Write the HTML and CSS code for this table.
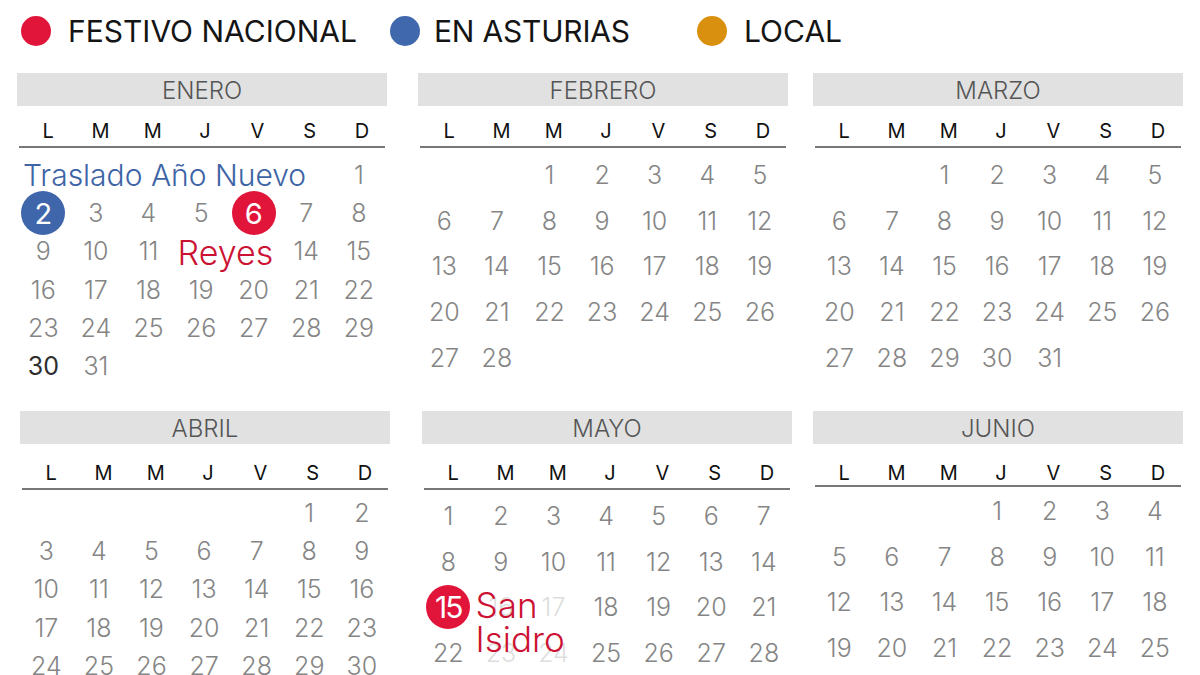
FILE: index.html
```html
<!DOCTYPE html>
<html lang="es">
<head>
<meta charset="utf-8">
<title>Calendario laboral 2023 Asturias</title>
<link rel="stylesheet" href="styles.css">
</head>
<body>
<div class="page">
  <header class="legend">
    <div class="legend-item legend-item--nacional"><span class="dot dot--red"></span><span class="legend-text">FESTIVO NACIONAL</span></div>
    <div class="legend-item legend-item--region"><span class="dot dot--blue"></span><span class="legend-text">EN ASTURIAS</span></div>
    <div class="legend-item legend-item--local"><span class="dot dot--orange"></span><span class="legend-text">LOCAL</span></div>
  </header>

  <main class="months">
    <section class="month month--top month--enero">
      <div class="month-title">ENERO</div>
      <div class="weekdays"><span>L</span><span>M</span><span>M</span><span>J</span><span>V</span><span>S</span><span>D</span></div>
      <div class="days days--short">
        <div class="note note--blue">Traslado Año Nuevo</div><div class="day">1</div>
        <div class="day"><span class="badge badge--blue">2</span></div><div class="day">3</div><div class="day">4</div><div class="day">5</div><div class="day"><span class="badge badge--red">6</span></div><div class="day">7</div><div class="day">8</div>
        <div class="day">9</div><div class="day">10</div><div class="day">11</div><div class="note note--reyes">Reyes</div><div class="day">14</div><div class="day">15</div>
        <div class="day">16</div><div class="day">17</div><div class="day">18</div><div class="day">19</div><div class="day">20</div><div class="day">21</div><div class="day">22</div>
        <div class="day">23</div><div class="day">24</div><div class="day">25</div><div class="day">26</div><div class="day">27</div><div class="day">28</div><div class="day">29</div>
        <div class="day day--dark">30</div><div class="day">31</div>
      </div>
    </section>

    <section class="month month--top month--febrero">
      <div class="month-title">FEBRERO</div>
      <div class="weekdays"><span>L</span><span>M</span><span>M</span><span>J</span><span>V</span><span>S</span><span>D</span></div>
      <div class="days">
        <div class="day"></div><div class="day"></div><div class="day">1</div><div class="day">2</div><div class="day">3</div><div class="day">4</div><div class="day">5</div>
        <div class="day">6</div><div class="day">7</div><div class="day">8</div><div class="day">9</div><div class="day">10</div><div class="day">11</div><div class="day">12</div>
        <div class="day">13</div><div class="day">14</div><div class="day">15</div><div class="day">16</div><div class="day">17</div><div class="day">18</div><div class="day">19</div>
        <div class="day">20</div><div class="day">21</div><div class="day">22</div><div class="day">23</div><div class="day">24</div><div class="day">25</div><div class="day">26</div>
        <div class="day">27</div><div class="day">28</div>
      </div>
    </section>

    <section class="month month--top month--marzo">
      <div class="month-title">MARZO</div>
      <div class="weekdays"><span>L</span><span>M</span><span>M</span><span>J</span><span>V</span><span>S</span><span>D</span></div>
      <div class="days">
        <div class="day"></div><div class="day"></div><div class="day">1</div><div class="day">2</div><div class="day">3</div><div class="day">4</div><div class="day">5</div>
        <div class="day">6</div><div class="day">7</div><div class="day">8</div><div class="day">9</div><div class="day">10</div><div class="day">11</div><div class="day">12</div>
        <div class="day">13</div><div class="day">14</div><div class="day">15</div><div class="day">16</div><div class="day">17</div><div class="day">18</div><div class="day">19</div>
        <div class="day">20</div><div class="day">21</div><div class="day">22</div><div class="day">23</div><div class="day">24</div><div class="day">25</div><div class="day">26</div>
        <div class="day">27</div><div class="day">28</div><div class="day">29</div><div class="day">30</div><div class="day">31</div>
      </div>
    </section>

    <section class="month month--bottom month--abril">
      <div class="month-title">ABRIL</div>
      <div class="weekdays"><span>L</span><span>M</span><span>M</span><span>J</span><span>V</span><span>S</span><span>D</span></div>
      <div class="days days--short">
        <div class="day"></div><div class="day"></div><div class="day"></div><div class="day"></div><div class="day"></div><div class="day">1</div><div class="day">2</div>
        <div class="day">3</div><div class="day">4</div><div class="day">5</div><div class="day">6</div><div class="day">7</div><div class="day">8</div><div class="day">9</div>
        <div class="day">10</div><div class="day">11</div><div class="day">12</div><div class="day">13</div><div class="day">14</div><div class="day">15</div><div class="day">16</div>
        <div class="day">17</div><div class="day">18</div><div class="day">19</div><div class="day">20</div><div class="day">21</div><div class="day">22</div><div class="day">23</div>
        <div class="day">24</div><div class="day">25</div><div class="day">26</div><div class="day">27</div><div class="day">28</div><div class="day">29</div><div class="day">30</div>
      </div>
    </section>

    <section class="month month--bottom month--mayo">
      <div class="month-title">MAYO</div>
      <div class="weekdays"><span>L</span><span>M</span><span>M</span><span>J</span><span>V</span><span>S</span><span>D</span></div>
      <div class="days">
        <div class="day">1</div><div class="day">2</div><div class="day">3</div><div class="day">4</div><div class="day">5</div><div class="day">6</div><div class="day">7</div>
        <div class="day">8</div><div class="day">9</div><div class="day">10</div><div class="day">11</div><div class="day">12</div><div class="day">13</div><div class="day">14</div>
        <div class="day day--anchor"><span class="badge badge--red badge--tight">15</span><div class="overlay-note">San<br>Isidro</div></div><div class="day">16</div><div class="day">17</div><div class="day">18</div><div class="day">19</div><div class="day">20</div><div class="day">21</div>
        <div class="day">22</div><div class="day">23</div><div class="day">24</div><div class="day">25</div><div class="day">26</div><div class="day">27</div><div class="day">28</div>
        <div class="day">29</div><div class="day day--local"><span class="badge badge--orange">30</span></div><div class="day">31</div>
      </div>
    </section>

    <section class="month month--bottom month--junio">
      <div class="month-title">JUNIO</div>
      <div class="weekdays"><span>L</span><span>M</span><span>M</span><span>J</span><span>V</span><span>S</span><span>D</span></div>
      <div class="days">
        <div class="day"></div><div class="day"></div><div class="day"></div><div class="day">1</div><div class="day">2</div><div class="day">3</div><div class="day">4</div>
        <div class="day">5</div><div class="day">6</div><div class="day">7</div><div class="day">8</div><div class="day">9</div><div class="day">10</div><div class="day">11</div>
        <div class="day">12</div><div class="day">13</div><div class="day">14</div><div class="day">15</div><div class="day">16</div><div class="day">17</div><div class="day">18</div>
        <div class="day">19</div><div class="day">20</div><div class="day">21</div><div class="day">22</div><div class="day">23</div><div class="day">24</div><div class="day">25</div>
        <div class="day">26</div><div class="day">27</div><div class="day">28</div><div class="day">29</div><div class="day">30</div>
      </div>
    </section>
  </main>
</div>
</body>
</html>
```

FILE: styles.css
```css
* { box-sizing: border-box; }

html, body {
  margin: 0;
  padding: 0;
  background: #ffffff;
}

body {
  width: 1200px;
  height: 675px;
  overflow: hidden;
  font-family: Inter, "Noto Sans", "Liberation Sans", sans-serif;
}

.page {
  width: 1200px;
  height: 675px;
  overflow: hidden;
}

/* Legend */
.legend {
  display: flex;
  align-items: center;
  height: 62px;
  padding-left: 21px;
}

.legend-item {
  display: flex;
  align-items: center;
}

.legend-item--nacional { width: 369px; }
.legend-item--region { width: 307px; }

.dot {
  width: 30px;
  height: 30px;
  border-radius: 50%;
  margin-right: 17px;
  flex: none;
}

.dot--red { background: #e1143a; }
.dot--blue { background: #4068ad; }
.dot--orange { background: #da900f; }

.legend-text {
  font-size: 30px;
  line-height: 36px;
  color: #141414;
  white-space: nowrap;
}

.legend-item--region .legend-text { letter-spacing: -0.2px; margin-left: -3px; }

/* Month grid */
.months {
  display: grid;
  grid-template-columns: 401px 395px 370px;
  grid-template-rows: 338px 264px;
  margin-top: 11px;
  padding-left: 17px;
}

.month {
  width: 370px;
}

.month--abril { margin-left: 3px; }
.month--mayo { margin-left: 4px; }

.month-title {
  height: 33px;
  line-height: 35px;
  background: #e1e1e1;
  color: #555555;
  font-size: 24px;
  font-weight: 300;
  text-align: center;
}

.weekdays {
  display: grid;
  grid-template-columns: repeat(7, 52.3px);
  margin: 0 2px;
  padding: 13px 0 3px 3px;
  border-bottom: 2px solid #777777;
  font-size: 20px;
  line-height: 24px;
  color: #111111;
  text-align: center;
}

.month--bottom .weekdays { padding-top: 17px; }
.month--junio .weekdays { padding-bottom: 0; }

.days {
  display: grid;
  grid-template-columns: repeat(7, 52.6px);
  grid-auto-rows: 45.8px;
  padding-top: 4px;
  font-size: 25px;
  font-weight: 300;
  color: #858585;
}

.days--short { grid-auto-rows: 38.2px; }
.month--enero .days { padding-top: 8px; }
.month--mayo .days { padding-top: 3px; }
.month--junio .days { padding-top: 1px; }

.day {
  display: flex;
  align-items: center;
  justify-content: center;
  white-space: nowrap;
}

.day--dark { color: #2e2e2e; font-weight: 400; }

.day--anchor { position: relative; }

.day--local { align-items: flex-start; }

/* Notes */
.note {
  display: flex;
  align-items: center;
  white-space: nowrap;
}

.note--blue {
  grid-column: span 6;
  padding-left: 6px;
  font-size: 30px;
  color: #3e64a6;
}

.note--reyes {
  grid-column: span 2;
  justify-content: center;
  padding-top: 3px;
  padding-right: 4px;
  font-size: 34px;
  color: #cc1233;
}

.overlay-note {
  position: absolute;
  left: calc(100% + 1px);
  top: 3px;
  width: 98px;
  height: 80px;
  z-index: 2;
  background: rgba(255, 255, 255, 0.72);
  font-size: 35px;
  line-height: 34px;
  color: #cc1233;
}

/* Badges */
.badge {
  width: 44px;
  height: 44px;
  flex: none;
  border-radius: 50%;
  display: flex;
  align-items: center;
  justify-content: center;
  color: #ffffff;
  font-size: 29px;
  font-weight: 400;
}

.badge--blue { background: #3f66ab; }
.badge--red { background: #e1143a; }
.badge--orange { background: #da900f; }
.badge--tight { letter-spacing: -2px; font-size: 30px; }
```
